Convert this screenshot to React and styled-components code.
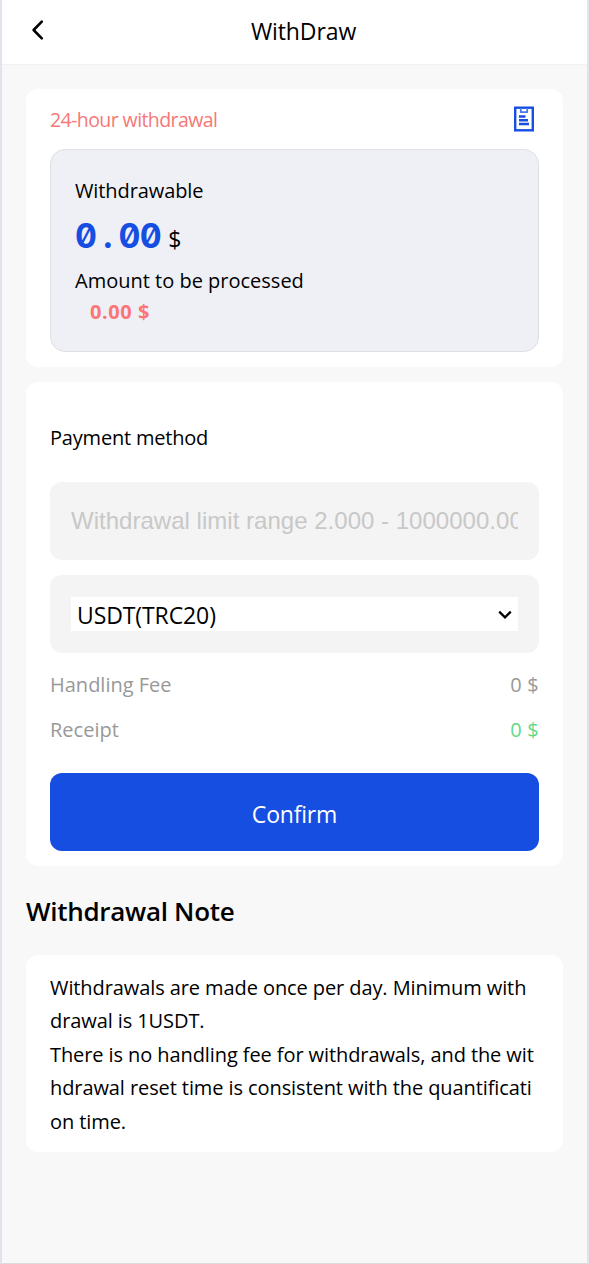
import React from "react";
import styled, { createGlobalStyle } from "styled-components";

const notes = [
  ["Withdrawals are made once per day. Minimum with", "drawal is 1USDT."],
  [
    "There is no handling fee for withdrawals, and the wit",
    "hdrawal reset time is consistent with the quantificati",
    "on time.",
  ],
];

const BackIcon = () => (
  <svg width="14" height="22" viewBox="0 0 14 22" fill="none">
    <path
      d="M11.8 2.6L3.6 11L11.8 19.4"
      stroke="#000"
      strokeWidth="2.6"
      strokeLinecap="round"
      strokeLinejoin="round"
    />
  </svg>
);

const RecordIcon = () => (
  <svg width="20" height="26" viewBox="0 0 20 26" fill="none">
    <rect x="1.2" y="1.7" width="17.6" height="22.6" stroke="#164ee2" strokeWidth="2.4" />
    <path d="M6.8 2V6.2H13.2V2" stroke="#4a7be8" strokeWidth="1.8" />
    <path d="M5 10.5H11.5M5 14.2H14M5 18H15" stroke="#164ee2" strokeWidth="2.4" />
  </svg>
);

const ArrowIcon = () => (
  <svg width="14" height="10" viewBox="0 0 14 10" fill="none">
    <path d="M1.2 1.6L7 7.4L12.8 1.6" stroke="#000" strokeWidth="2.2" />
  </svg>
);

const App = () => {
  return (
    <>
      <GlobalStyle />
      <Page>
        <Header>
          <BackButton>
            <BackIcon />
          </BackButton>
          <Title>WithDraw</Title>
        </Header>

        <Content>
          <Card>
            <CardHead>
              <Text $color="#f87777" $size="19.5px" $spacing="-0.58px">
                24-hour withdrawal
              </Text>
              <RecordIcon />
            </CardHead>
            <Balance>
              <Text $spacing="-0.1px">Withdrawable</Text>
              <Amount>
                <strong>
                  0<Dot>.</Dot>00
                </strong>
                <span>$</span>
              </Amount>
              <Text>Amount to be processed</Text>
              <Pending>0.00 $</Pending>
            </Balance>
          </Card>

          <FormCard>
            <Label>Payment method</Label>
            <Field>
              <Input placeholder="Withdrawal limit range 2.000 - 1000000.000" />
            </Field>
            <Field>
              <Select>
                USDT(TRC20)
                <ArrowIcon />
              </Select>
            </Field>
            <Row>
              <Text $color="#999">Handling Fee</Text>
              <Text $color="#999" $spacing="0.2px">0 $</Text>
            </Row>
            <Row>
              <Text $color="#999">Receipt</Text>
              <Text $color="#5fd987" $spacing="0.2px">0 $</Text>
            </Row>
            <Confirm>Confirm</Confirm>
          </FormCard>

          <NoteTitle>Withdrawal Note</NoteTitle>
          <NoteCard>
            {notes.map((lines, i) => (
              <p key={i}>
                {lines.map((line) => (
                  <span key={line}>{line}</span>
                ))}
              </p>
            ))}
          </NoteCard>
        </Content>
      </Page>
    </>
  );
};

const GlobalStyle = createGlobalStyle`
  * {
    box-sizing: border-box;
  }

  body {
    margin: 0;
    font-family: "Open Sans", "Noto Sans", sans-serif;
    font-size: 20px;
    color: #000;
  }
`;

const Page = styled.div`
  height: 1264px;
  background-color: #f8f8f8;
  border: solid #e0e3ea;
  border-width: 0 2px 1px;
  border-bottom-color: #d9dbe0;
  overflow: hidden;
`;

const Header = styled.div`
  height: 65px;
  display: grid;
  grid-template-columns: 60px 1fr 42px;
  align-items: center;
  background-color: #fff;
  border-bottom: 1px solid #f1f1f1;
`;

const BackButton = styled.button`
  display: flex;
  padding: 0 0 4px 28px;
  background: none;
  border: none;
`;

const Title = styled.div`
  padding-bottom: 2px;
  text-align: center;
  font-size: 23px;
  letter-spacing: -0.1px;
`;

const Content = styled.div`
  padding: 24px 24px 0;
`;

const Card = styled.div`
  height: 278px;
  padding: 0 24px;
  border-radius: 12px;
  background-color: #fff;
`;

const CardHead = styled.div`
  height: 60px;
  display: flex;
  align-items: center;
  justify-content: space-between;

  svg {
    margin-right: 5px;
  }
`;

const Text = styled.div`
  padding-top: 1px;
  color: ${({ $color }) => $color || "#000"};
  font-size: ${({ $size }) => $size || "20px"};
  letter-spacing: ${({ $spacing }) => $spacing || "0"};
  line-height: 30px;
  white-space: nowrap;
`;

const Balance = styled.div`
  height: 203px;
  padding: 25px 24px 0;
  border: 1px solid #dfe0e4;
  border-radius: 15px;
  background-color: #eff0f6;
`;

const Amount = styled.div`
  height: 59px;
  display: flex;
  align-items: baseline;
  gap: 7px;
  line-height: 59px;
  font-size: 23px;

  strong {
    font-family: "Inter", "DejaVu Sans Mono", monospace;
    font-feature-settings: "zero", "tnum";
    font-size: 34px;
    letter-spacing: -0.6px;
    color: #164ee2;
  }
`;

const Dot = styled.span`
  display: inline-block;
  width: 22px;
  text-align: center;
`;

const Pending = styled.div`
  padding-left: 15px;
  line-height: 32px;
  font-weight: 700;
  letter-spacing: 0.55px;
  color: #fb7676;
`;

const FormCard = styled(Card)`
  height: 484px;
  margin-top: 15px;
  padding-top: 41px;
`;

const Label = styled.div`
  height: 59px;
  line-height: 30px;
  letter-spacing: -0.2px;
`;

const Field = styled.div`
  height: 78px;
  margin-bottom: 15px;
  padding: 0 21px;
  display: flex;
  align-items: center;
  border-radius: 12px;
  background-color: #f4f4f4;
`;

const Input = styled.input`
  width: 100%;
  padding: 0;
  border: none;
  outline: none;
  background: none;
  font-family: "Liberation Sans", Arial, sans-serif;
  font-size: 24px;
  letter-spacing: 0.02px;

  &::placeholder {
    color: #c8c8c8;
  }
`;

const Select = styled.div`
  flex: 1;
  height: 34px;
  padding: 2px 6px 0;
  display: flex;
  align-items: center;
  justify-content: space-between;
  background-color: #fff;
  font-size: 23px;
  letter-spacing: -0.1px;
`;

const Row = styled.div`
  height: 45px;
  padding-top: 1px;
  display: flex;
  justify-content: space-between;
`;

const Confirm = styled.button`
  width: 100%;
  height: 78px;
  margin-top: 15px;
  padding-top: 4px;
  border: none;
  border-radius: 12px;
  background-color: #164ee2;
  color: #fff;
  font-family: inherit;
  font-size: 23px;
  letter-spacing: -0.2px;
`;

const NoteTitle = styled.h2`
  margin: 0;
  height: 89px;
  line-height: 91px;
  font-size: 26px;
  font-weight: 600;
  letter-spacing: -0.3px;
`;

const NoteCard = styled.div`
  height: 197px;
  padding: 16px 24px;
  border-radius: 12px;
  background-color: #fff;
  line-height: 33.4px;
  letter-spacing: -0.09px;

  p {
    margin: 0;
  }

  span {
    display: block;
    white-space: nowrap;
  }
`;

export default App;
